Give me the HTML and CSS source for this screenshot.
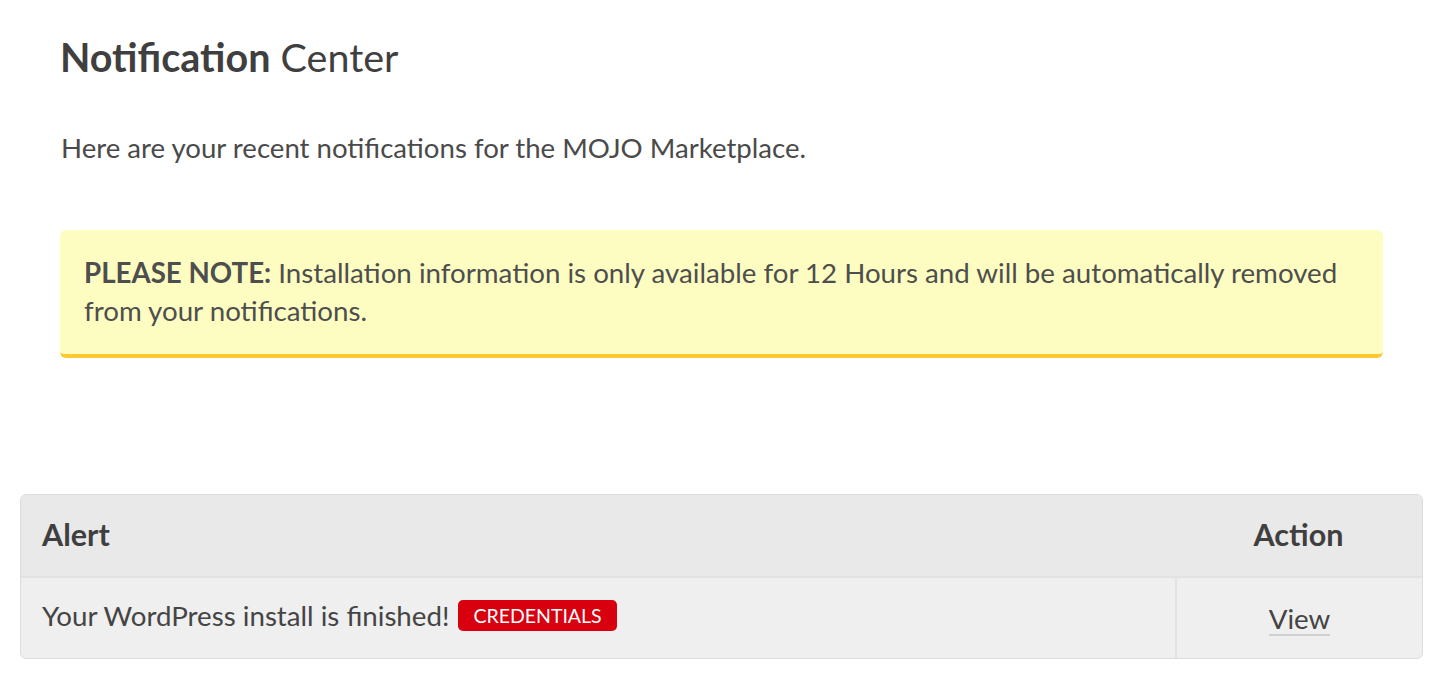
FILE: index.html
```html
<!DOCTYPE html>
<html>
<head>
<meta charset="utf-8">
<link rel="stylesheet" href="styles.css">
</head>
<body>
<div class="page">
  <section class="intro">
    <h1 class="title"><strong>Notification</strong> Center</h1>
    <p class="lead">Here are your recent notifications for the MOJO Marketplace.</p>
    <div class="note"><strong>PLEASE NOTE:</strong> Installation information is only available for 12 Hours and will be automatically removed from your notifications.</div>
  </section>
  <div class="table">
    <div class="row head">
      <div class="cell alert">Alert</div>
      <div class="cell action">Action</div>
    </div>
    <div class="row body">
      <div class="cell alert">Your WordPress install is finished! <span class="badge">CREDENTIALS</span></div>
      <div class="cell action"><a class="view" href="#">View</a></div>
    </div>
  </div>
</div>
</body>
</html>
```
FILE: styles.css
```css
* { box-sizing: border-box; }
html, body { margin: 0; padding: 0; background: #fff; }
body {
  font-family: Lato, "Open Sans", sans-serif;
  color: #4a4a4a;
}
.page { padding: 0 24px 0 20px; }
.intro { padding: 0 40px 0 40px; }
.title {
  margin: 0;
  padding-top: 33px;
  font-size: 39.5px;
  line-height: 48px;
  font-weight: 400;
  color: #3f3f3f;
}
.title strong { font-weight: 700; }
.lead {
  margin: 50px 0 0 1px;
  font-size: 27.6px;
  line-height: 34px;
}
.note {
  margin-top: 65px;
  background: #fdfdc1;
  border-bottom: 4px solid #fcc830;
  border-radius: 6px;
  padding: 24px 24px 24px 24px;
  font-size: 27.7px;
  line-height: 38px;
  color: #4e4e4e;
}
.note strong { font-weight: 700; }
.table {
  margin-top: 136px;
  border: 1px solid #dcdcdc;
  border-radius: 6px;
  overflow: hidden;
  background: #efefef;
}
.row { display: flex; }
.head {
  background: #e9e9e9;
  height: 83px;
  border-bottom: 2px solid #e2e2e2;
  font-weight: 700;
  font-size: 30.5px;
  color: #3f3f3f;
}
.head .cell { padding-bottom: 3px; }
.body { height: 80px; font-size: 27.7px; color: #444; }
.cell { display: flex; align-items: center; }
.body .alert { padding-bottom: 6px; }
.alert { flex: 1; padding-left: 21px; }
.action { width: 247px; justify-content: center; }
.body .action { border-left: 2px solid #e3e3e3; }
.badge {
  display: inline-block;
  margin-left: 9px;
  background: #d8000f;
  color: #fff;
  font-size: 19.5px;
  line-height: 31px;
  padding: 0 15px;
  border-radius: 5px;
  vertical-align: -2px;
}
.view {
  color: #444;
  text-decoration: none;
  border-bottom: 2px solid #d0d0d0;
  line-height: 31px;
  margin-top: 2px;
}
```
